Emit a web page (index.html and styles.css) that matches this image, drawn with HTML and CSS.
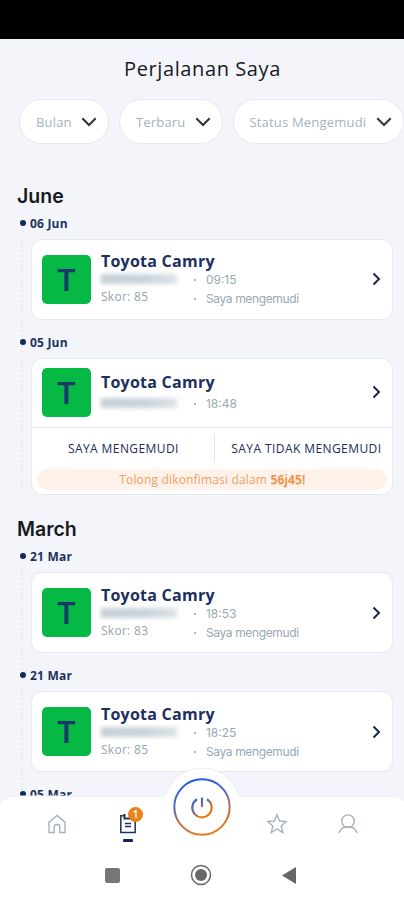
FILE: index.html
```
<!DOCTYPE html>
<html lang="id">
<head>
<meta charset="utf-8">
<meta name="viewport" content="width=device-width">
<title>Perjalanan Saya</title>
<link rel="stylesheet" href="styles.css">
</head>
<body>
<div class="phone">
  <div class="statusbar"></div>
  <main class="content">
    <h1 class="title"><span>Perjalanan Saya</span></h1>
    <div class="filters">
      <button class="pill pill-month"><span>Bulan</span><svg class="down" viewBox="0 0 16 10"><path d="M1.3 1.3L8 8L14.7 1.3"/></svg></button>
      <button class="pill pill-sort"><span>Terbaru</span><svg class="down" viewBox="0 0 16 10"><path d="M1.3 1.3L8 8L14.7 1.3"/></svg></button>
      <button class="pill pill-status"><span>Status Mengemudi</span><svg class="down" viewBox="0 0 16 10"><path d="M1.3 1.3L8 8L14.7 1.3"/></svg></button>
    </div>

    <h2 class="month june">June</h2>
    <section class="timeline">
      <div class="date"><i class="bullet"></i><span>06 Jun</span></div>
      <article class="card">
        <div class="trip">
          <div class="avatar">T</div>
          <div class="info">
            <div class="car">Toyota Camry</div>
            <div class="details">
              <div class="left"><div class="plate"></div><div class="score">Skor: 85</div></div>
              <div class="right"><div class="fact">09:15</div><div class="fact role">Saya mengemudi</div></div>
            </div>
          </div>
          <svg class="next" viewBox="0 0 9 14"><path d="M1.5 1.5L7 7L1.5 12.5"/></svg>
        </div>
      </article>
      <div class="date"><i class="bullet"></i><span>05 Jun</span></div>
      <article class="card">
        <div class="trip pending">
          <div class="avatar">T</div>
          <div class="info">
            <div class="car">Toyota Camry</div>
            <div class="details">
              <div class="left"><div class="plate"></div></div>
              <div class="right"><div class="fact">18:48</div></div>
            </div>
          </div>
          <svg class="next" viewBox="0 0 9 14"><path d="M1.5 1.5L7 7L1.5 12.5"/></svg>
        </div>
        <div class="choices">
          <button class="choice yes">SAYA MENGEMUDI</button>
          <i class="split"></i>
          <button class="choice no">SAYA TIDAK MENGEMUDI</button>
        </div>
        <div class="notice"><span>Tolong dikonfimasi dalam<b> 56j45!</b></span></div>
      </article>
    </section>

    <h2 class="month march">March</h2>
    <section class="timeline older">
      <div class="date"><i class="bullet"></i><span>21 Mar</span></div>
      <article class="card">
        <div class="trip">
          <div class="avatar">T</div>
          <div class="info">
            <div class="car">Toyota Camry</div>
            <div class="details">
              <div class="left"><div class="plate"></div><div class="score">Skor: 83</div></div>
              <div class="right"><div class="fact">18:53</div><div class="fact role">Saya mengemudi</div></div>
            </div>
          </div>
          <svg class="next" viewBox="0 0 9 14"><path d="M1.5 1.5L7 7L1.5 12.5"/></svg>
        </div>
      </article>
      <div class="date"><i class="bullet"></i><span>21 Mar</span></div>
      <article class="card">
        <div class="trip">
          <div class="avatar">T</div>
          <div class="info">
            <div class="car">Toyota Camry</div>
            <div class="details">
              <div class="left"><div class="plate"></div><div class="score">Skor: 85</div></div>
              <div class="right"><div class="fact">18:25</div><div class="fact role">Saya mengemudi</div></div>
            </div>
          </div>
          <svg class="next" viewBox="0 0 9 14"><path d="M1.5 1.5L7 7L1.5 12.5"/></svg>
        </div>
      </article>
      <div class="date"><i class="bullet"></i><span>05 Mar</span></div>
    </section>
  </main>

  <footer class="dock">
    <svg class="dock-shape" viewBox="0 0 404 132">
      <path d="M-3 136V42Q2 28 14 28H161C165 28 166 25 167.500 22A38 38 0 0 1 236.500 22C238 25 238 28 242 28H392Q402 28 408 38V136Z" fill="#fff" stroke="#e9ecf0" stroke-width="1"/>
    </svg>
    <nav class="tabs">
      <div class="tab"><svg class="home" viewBox="0 0 20 20"><path d="M2 8.200L10 1.500L18 8.200V18.500H12.800V13Q12.800 10.500 10 10.500Q7.200 10.500 7.200 13V18.500H2Z"/></svg></div>
      <div class="tab active">
        <svg class="clip" viewBox="0 0 18 20"><path d="M5 1.800H1.800V18.500H16.200V1.800H13"/><path d="M5.500 0V4.500H12V0" stroke-width="2"/><path d="M6 9.500H12M6 12.500H12"/></svg>
        <span class="badge">1</span>
        <i class="underline"></i>
      </div>
      <div class="tab power">
        <svg viewBox="0 0 58 58">
          <defs><linearGradient id="ring" x1="0.350" y1="0" x2="0.650" y2="1"><stop offset="0" stop-color="#1f5fe0"/><stop offset=".3" stop-color="#3e67c6"/><stop offset=".66" stop-color="#c3703f"/><stop offset="1" stop-color="#e77b16"/></linearGradient>
          <linearGradient id="glyph" gradientUnits="userSpaceOnUse" x1="21" y1="20" x2="36" y2="38"><stop offset="0" stop-color="#2864de"/><stop offset=".5" stop-color="#876b8b"/><stop offset=".8" stop-color="#e77b16"/></linearGradient></defs>
          <circle cx="29" cy="29" r="27.700" fill="none" stroke="url(#ring)" stroke-width="2"/>
          <path d="M24 21.300A9.700 9.700 0 1 0 34 21.300M29 19.500V29" fill="none" stroke="url(#glyph)" stroke-width="2.200"/>
        </svg>
      </div>
      <div class="tab"><svg class="star" viewBox="0 0 22 22"><path d="M11 1.800L13.600 8L20.200 8.600L15.200 13L16.700 19.500L11 16L5.300 19.500L6.800 13L1.800 8.600L8.400 8Z"/></svg></div>
      <div class="tab"><svg class="user" viewBox="0 0 22 22"><circle cx="11" cy="8.200" r="6.300"/><path d="M2 20Q4 15 8 14H14Q18 15 20 20"/></svg></div>
    </nav>
    <div class="system">
      <i class="recent"></i>
      <svg class="circle" viewBox="0 0 22 22"><circle cx="11" cy="11" r="9.500" fill="none" stroke="#686868" stroke-width="1.500"/><circle cx="11" cy="11" r="6" fill="#686868"/></svg>
      <svg class="back" viewBox="0 0 14 17"><path d="M14 0V17L0 8.500Z" fill="#666"/></svg>
    </div>
  </footer>
</div>
</body>
</html>
```
FILE: styles.css
```
* { box-sizing: border-box; }
body { margin: 0; background: #f3f5fa; font-family: "Open Sans", "Noto Sans", sans-serif; }
button { border: 0; padding: 0; background: none; font: inherit; }
.phone { position: relative; width: 404px; height: 900px; overflow: hidden; background: #f3f5fa; }
.statusbar { height: 39px; background: #000; }
.title { margin: 0; height: 60px; padding: 1px 0 0 1px; line-height: 58px; text-align: center; font-size: 20px; font-weight: 400; letter-spacing: .6px; color: #17191d; }
.filters { display: flex; gap: 10px; padding-left: 19.400px; height: 45px; }
.pill { flex: none; display: flex; align-items: center; height: 45px; padding-left: 15.500px; border: 1px solid #e6e9ee; border-radius: 23px; background: #fff; color: #a5b3bc; font-size: 13px; letter-spacing: .2px; white-space: nowrap; }
.pill-month { width: 90px; }
.pill-sort { width: 103.500px; }
.pill-status { width: 171px; }
.down { width: 16px; height: 10px; margin-left: auto; margin-right: 11px; fill: none; stroke: #303236; stroke-width: 2; }
.month { margin: 0 0 0 17px; height: 24px; font: 600 19.500px/24px Inter, sans-serif; color: #17191d; }
.june { margin-top: 40px; margin-bottom: 7px; }
.march { margin-top: 22px; margin-bottom: 7px; }
.timeline { background: repeating-linear-gradient(#e7eaf0 0 2px, transparent 2px 5px) 21px 10px / 2px 100% no-repeat; }
.date { display: flex; align-items: center; gap: 4px; height: 16px; padding-left: 20px; color: #1d3260; font-size: 12px; font-weight: 700; letter-spacing: .2px; }
.bullet { width: 6px; height: 6px; border-radius: 50%; background: #152a5c; }
.card { width: 362px; margin: 8px 0 14px 31.400px; border: 1px solid #e6e9ed; border-radius: 11px; background: #fff; }
.timeline .card:last-child { margin-bottom: 0; }
.trip { display: flex; height: 79px; padding: 15px 11px 0 9.500px; }
.avatar { flex: none; width: 49px; height: 49px; border-radius: 5px; background: #06b944; color: #16396a; text-align: center; font: 600 30px/51px Inter, sans-serif; }
.info { flex: 1; padding-left: 10px; }
.car { height: 18px; margin-top: -3px; line-height: 18px; font-size: 16px; font-weight: 700; letter-spacing: .25px; color: #1d2f5e; }
.details { display: flex; }
.left { width: 91px; }
.plate { width: 76px; height: 10px; margin-top: 4px; background: linear-gradient(90deg, #c6d0d6, #c9d3da 55%, #dce3e7); filter: blur(2px); }
.score { margin-top: 5px; line-height: 16px; font-size: 12px; letter-spacing: .3px; color: #93a4b1; }
.fact { display: flex; align-items: center; height: 19px; font: 400 12px/19px Inter, sans-serif; color: #98a8b3; white-space: nowrap; }
.fact::before { content: ""; width: 2px; height: 2px; margin: 0 10px 0 2px; background: #adb9c2; }
.role { letter-spacing: -.36px; }
.next { flex: none; width: 9px; height: 14px; margin-top: 17px; fill: none; stroke: #1c264f; stroke-width: 2; }
.older .car { margin-top: -2px; }
.older .next { margin-top: 18px; }
.pending { height: 68px; padding-top: 9px; }
.pending .car { margin-top: 5px; }
.pending .details { padding-top: 3px; }
.choices { display: flex; align-items: center; height: 41px; border-top: 1px solid #e6e9ed; color: #252b57; font-size: 12px; font-weight: 400; }
.choice { flex: 1; color: #252b57; letter-spacing: .42px; white-space: nowrap; }
.no { padding-left: 5px; }
.split { width: 1px; height: 28px; background: #e0e4e9; }
.yes { flex: 0 0 182px; }
.notice { width: 350px; height: 21px; margin: 1px auto 4px; border-radius: 11px; background: #fff2eb; color: #efa061; text-align: center; font-size: 12px; line-height: 21px; letter-spacing: .17px; }
.notice b { font-weight: 600; color: #ee8c3e; text-shadow: 0 1px 1px #f7c7a2; }
.dock { position: absolute; left: 0; bottom: 0; width: 404px; height: 132px; }
.dock-shape { position: absolute; inset: 0; width: 404px; height: 132px; }
.tabs { position: relative; display: grid; grid-template-columns: 71px 71px 77px 73px 70px; padding-left: 21px; height: 80px; }
.tab { position: relative; display: flex; flex-direction: column; align-items: center; padding-top: 46px; }
.tab svg { flex: none; fill: none; stroke: #a7b1bb; stroke-width: 1.400; }
.tab .home { width: 20px; height: 20px; }
.tab .clip { width: 18px; height: 20px; stroke: #203263; stroke-width: 1.500; }
.tab .star, .tab .user { width: 22px; height: 22px; margin-top: -1px; }
.badge { position: absolute; left: 36px; top: 39px; width: 15px; height: 15px; border-radius: 50%; background: #ea8220; color: #fff; text-align: center; font-size: 10px; font-weight: 600; line-height: 15px; }
.underline { width: 10px; height: 3px; margin-top: 5px; border-radius: 1px; background: #18224f; }
.tabs .power { padding-top: 10px; }
.power svg { width: 58px; height: 58px; }
.system { position: relative; display: flex; align-items: center; height: 52px; padding: 2px 0 0 105px; }
.recent { width: 15px; height: 15px; border-radius: 2px; background: #767676; }
.circle { width: 22px; height: 22px; margin-left: 70px; }
.back { width: 14px; height: 17px; margin-left: 70px; }
```
